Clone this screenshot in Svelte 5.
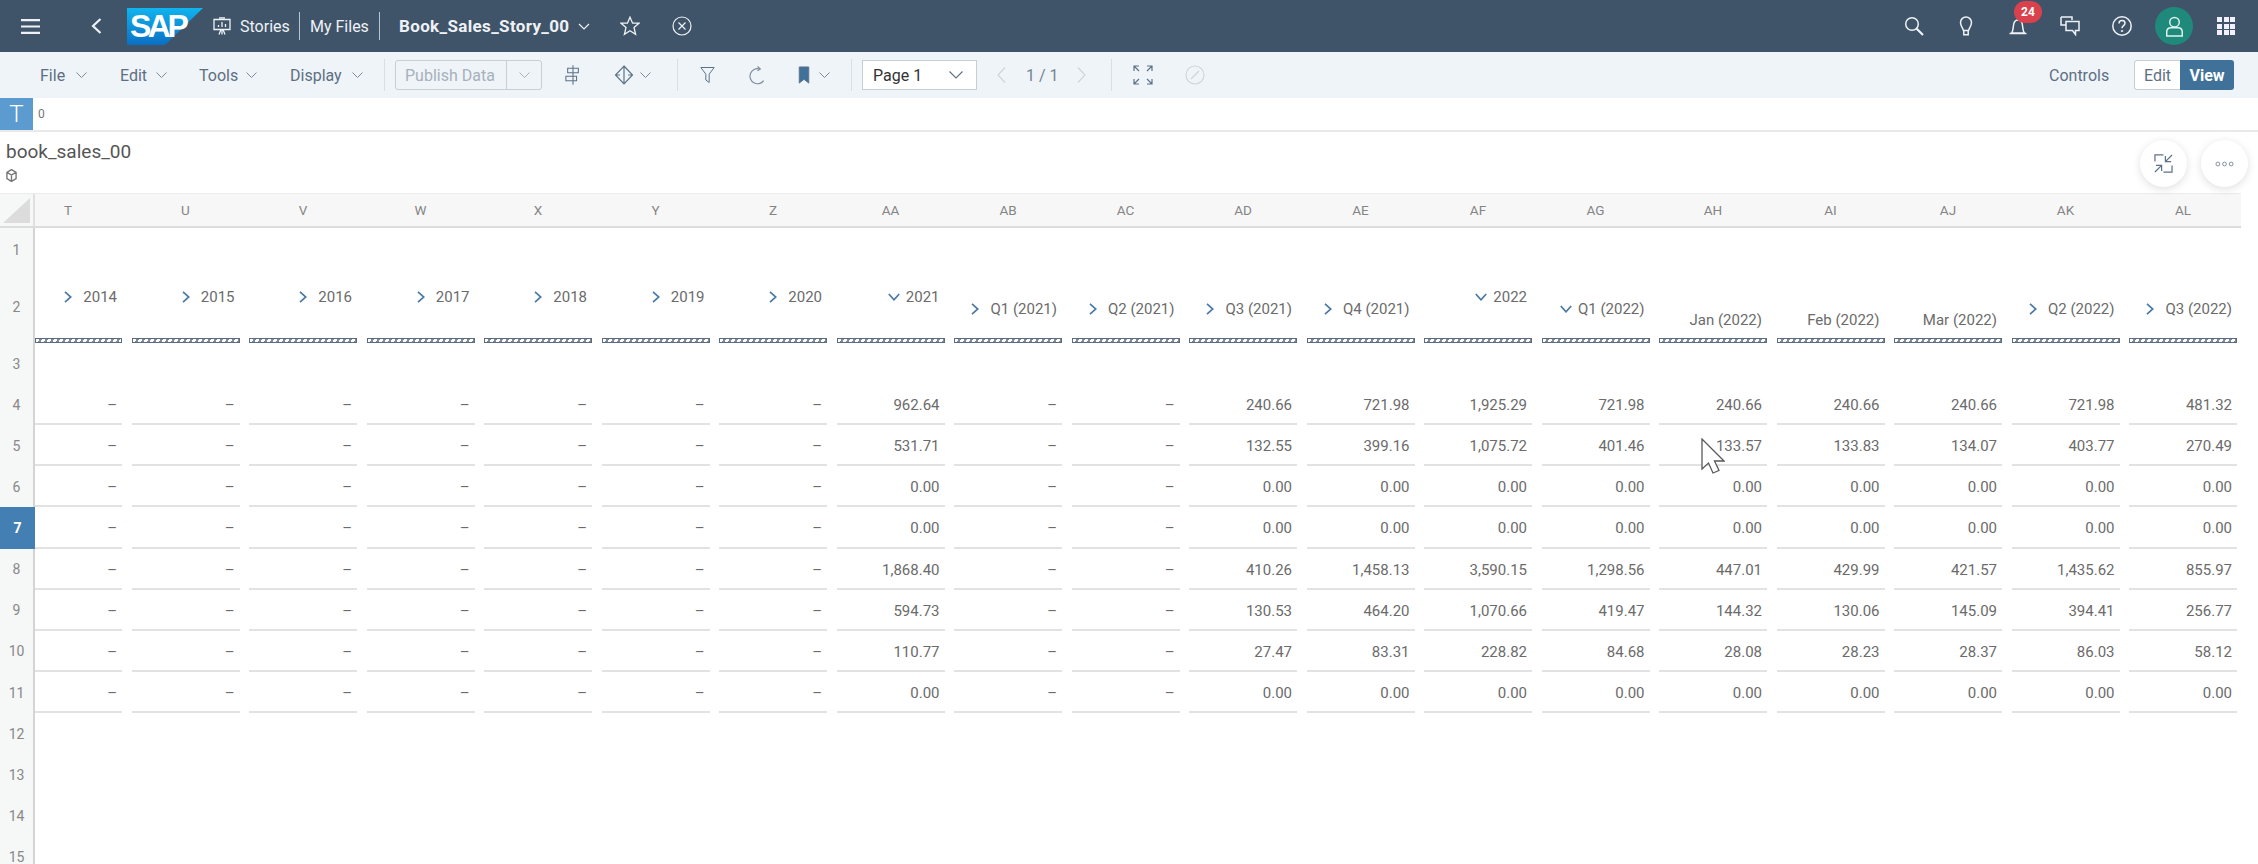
<script>
  const letters = ['T','U','V','W','X','Y','Z','AA','AB','AC','AD','AE','AF','AG','AH','AI','AJ','AK','AL'];
  const heads = [
    ['2014',0,'r'],['2015',0,'r'],['2016',0,'r'],['2017',0,'r'],['2018',0,'r'],['2019',0,'r'],['2020',0,'r'],
    ['2021',0,'d'],['Q1 (2021)',1,'r'],['Q2 (2021)',1,'r'],['Q3 (2021)',1,'r'],['Q4 (2021)',1,'r'],
    ['2022',0,'d'],['Q1 (2022)',1,'d'],['Jan (2022)',2,''],['Feb (2022)',2,''],['Mar (2022)',2,''],['Q2 (2022)',1,'r'],['Q3 (2022)',1,'r']
  ];
  const d = '–', z = '0.00';
  const col = (a,b,c,e,f) => [a,b,z,z,c,e,f,z];
  const blank = [d,d,d,d,d,d,d,d];
  const cols = [
    blank,blank,blank,blank,blank,blank,blank,
    col('962.64','531.71','1,868.40','594.73','110.77'),
    blank,blank,
    col('240.66','132.55','410.26','130.53','27.47'),
    col('721.98','399.16','1,458.13','464.20','83.31'),
    col('1,925.29','1,075.72','3,590.15','1,070.66','228.82'),
    col('721.98','401.46','1,298.56','419.47','84.68'),
    col('240.66','133.57','447.01','144.32','28.08'),
    col('240.66','133.83','429.99','130.06','28.23'),
    col('240.66','134.07','421.57','145.09','28.37'),
    col('721.98','403.77','1,435.62','394.41','86.03'),
    col('481.32','270.49','855.97','256.77','58.12')
  ];
  const dataRows = [0,1,2,3,4,5,6,7];
  const emptyRows = [12,13,14,15];
</script>

<div class="page">
  <header class="top">
    <svg class="menu" viewBox="0 0 19 15"><path d="M0 1.2h19M0 7.5h19M0 13.8h19"/></svg>
    <svg class="back" viewBox="0 0 11 16"><path d="M9.5 1 2 8l7.5 7"/></svg>
    <div class="logo"><svg viewBox="0 0 76 37" preserveAspectRatio="none"><defs><linearGradient id="sapg" x1="0" y1="0" x2="0" y2="1"><stop offset="0" stop-color="#10b4ee"/><stop offset="1" stop-color="#0a6fc4"/></linearGradient></defs><polygon points="0,0 76,0 38,37 0,37" fill="url(#sapg)"/></svg><span>SAP</span></div>
    <svg class="board" viewBox="0 0 18 18"><path d="M1 2.5h16v10H1zM6 .8h6M9 12.5v5M6 17.5l2-5M12 17.5l-2-5M5.5 10V8M9 10V5M12.5 10V7"/></svg>
    <span class="stories">Stories</span>
    <i class="tdiv first"></i>
    <span class="myfiles">My Files</span>
    <i class="tdiv second"></i>
    <b class="story">Book_Sales_Story_00</b>
    <svg class="tchev" viewBox="0 0 12 7"><path d="M1 1l5 5 5-5"/></svg>
    <svg class="star" viewBox="0 0 20 20"><path d="M10 1.2l2.6 6h6.4l-5 4.3 1.6 6.8L10 14.700l-5.600 3.600L6 11.500 1 7.200h6.400z"/></svg>
    <svg class="closec" viewBox="0 0 20 20"><circle cx="10" cy="10" r="9"/><path d="M6.500 6.500l7 7M13.500 6.500l-7 7"/></svg>

    <svg class="search ri" viewBox="0 0 20 20"><circle cx="8" cy="8" r="6.300"/><path d="M12.500 12.500l6.500 6.500" class="thick"/></svg>
    <svg class="ri" viewBox="0 0 20 20"><path d="M7.500 14.500C6.800 11.500 4.500 10 4.500 6.500a5.500 5.500 0 0 1 11 0c0 3.500-2.300 5-3 8zM7.800 14.500h4.400v4.300H7.800z"/></svg>
    <div class="bell ri">
      <svg viewBox="0 0 20 20"><path d="M3.500 17c2-2 1.500-7 2.500-10 .6-1.800 2-3 4-3s3.400 1.200 4 3c1 3 .5 8 2.500 10zM1.500 17.500h17"/></svg>
      <span class="badge">24</span>
    </div>
    <svg class="ri" viewBox="0 0 20 20"><path d="M1 1h11v3M6 9H1V1M6 5.500h13v9h-3.500v4l-3-4H6z"/></svg>
    <svg class="ri" viewBox="0 0 20 20"><circle cx="10" cy="10" r="9.200"/><path d="M7 7.500c0-2 1.300-3 3-3s3 1 3 2.700c0 2.300-3 2.500-3 5"/><path d="M10 14.200v1.600" class="thick"/></svg>
    <div class="avatar"><svg viewBox="0 0 22 24"><circle cx="11" cy="7" r="5.500"/><path d="M2 23v-4.500c0-3 2-5 5-5h8c3 0 5 2 5 5V23z"/></svg></div>
    <div class="apps">{#each Array(9) as _}<i></i>{/each}</div>
  </header>

  <nav class="tools">
    <span class="m file">File</span><svg class="mc" viewBox="0 0 11 6"><path d="M.5.500l5 5 5-5"/></svg>
    <span class="m edit">Edit</span><svg class="mc" viewBox="0 0 11 6"><path d="M.5.500l5 5 5-5"/></svg>
    <span class="m tl">Tools</span><svg class="mc" viewBox="0 0 11 6"><path d="M.5.500l5 5 5-5"/></svg>
    <span class="m disp">Display</span><svg class="mc" viewBox="0 0 11 6"><path d="M.5.500l5 5 5-5"/></svg>
    <i class="bdiv d1"></i>
    <div class="publish"><span>Publish Data</span><em><svg viewBox="0 0 11 6"><path d="M.5.500l5 5 5-5"/></svg></em></div>
    <svg class="tic align" viewBox="0 0 18 22"><path d="M9 0v22M3 3.500h12v5H3zM1 12.500h12v5H1z"/></svg>
    <svg class="tic move" viewBox="0 0 20 20"><path d="M10 1l8.500 9-8.500 9-8.500-9zM10 1v18M6 10H1.500M18.500 10H14"/></svg>
    <svg class="mc movec" viewBox="0 0 11 6"><path d="M.5.500l5 5 5-5"/></svg>
    <i class="bdiv d2"></i>
    <svg class="tic filter" viewBox="0 0 18 20"><path d="M1 1h16l-6 8v10l-4-3V9z"/></svg>
    <svg class="tic refresh" viewBox="0 0 18 20"><path d="M15.500 15.500A8 8 0 1 1 11 3"/><path d="M9 .5l3 2.500-3 2"/></svg>
    <svg class="bookmark" viewBox="0 0 12 20"><path d="M1 1h10v17l-5-4-5 4z"/></svg>
    <svg class="mc bmc" viewBox="0 0 11 6"><path d="M.5.500l5 5 5-5"/></svg>
    <i class="bdiv d3"></i>
    <div class="pagesel"><span>Page 1</span><svg viewBox="0 0 14 8"><path d="M.5.500l6.500 6.500 6.500-6.500"/></svg></div>
    <svg class="pg prev" viewBox="0 0 9 16"><path d="M8 .5 1 8l7 7.500"/></svg>
    <span class="count">1 / 1</span>
    <svg class="pg next" viewBox="0 0 9 16"><path d="M1 .5 8 8l-7 7.500"/></svg>
    <i class="bdiv d4"></i>
    <svg class="tic full" viewBox="0 0 20 20"><path d="M1 6V1h5M1 1l5 5M19 6V1h-5M19 1l-5 5M1 14v5h5M1 19l5-5M19 14v5h-5M19 19l-5-5"/></svg>
    <svg class="tic check" viewBox="0 0 20 20"><circle cx="10" cy="10" r="9"/><path d="M6 14 14 6"/></svg>
    <span class="controls">Controls</span>
    <div class="seg"><span class="e">Edit</span><span class="v">View</span></div>
  </nav>

  <section class="formula">
    <div class="tbox">T</div>
    <span>0</span>
  </section>

  <section class="title">
    <div class="name">book_sales_00</div>
    <svg class="cube" viewBox="0 0 12 14"><path d="M6 .5l5 3v7l-5 3-5-3v-7zM1 3.500l5 3 5-3M6 6.500v7"/></svg>
  </section>

  <section class="sheet">
    <div class="row colhead">
      <div class="rh corner"><i></i></div>
      <div class="cells">{#each letters as l}<div class="letter">{l}</div>{/each}</div>
    </div>
    <div class="row r1"><div class="rh">1</div><div class="cells"></div></div>
    <div class="row r2">
      <div class="rh">2</div>
      <div class="cells">
        {#each heads as [t,lvl,ch]}
          <div class="hcell">
            <div class="htext l{lvl}">
              {#if ch==='r'}<svg class="ch" viewBox="0 0 8 12"><path d="M1 .8 6.800 6 1 11.200"/></svg>{/if}
              {#if ch==='d'}<svg class="chd" viewBox="0 0 12 8"><path d="M.8 1 6 6.800 11.200 1"/></svg>{/if}
              <span>{t}</span>
            </div>
            <div class="hatch"></div>
          </div>
        {/each}
      </div>
    </div>
    <div class="row r3"><div class="rh">3</div><div class="cells"></div></div>
    {#each dataRows as r}
      <div class="row data">
        <div class="rh" class:sel={r===3}>{r+4}</div>
        <div class="cells">{#each cols as c}<div class="cell">{c[r]}</div>{/each}</div>
      </div>
    {/each}
    {#each emptyRows as n}
      <div class="row data"><div class="rh">{n}</div><div class="cells"></div></div>
    {/each}
  </section>

  <button class="fab f1" aria-label="collapse"><svg viewBox="0 0 20 20"><path d="M1 8V1h9M1 19l7-7M2 12h6v6M19 12v7h-9M19 1l-7 7M18 8h-6V2"/></svg></button>
  <button class="fab f2" aria-label="more"><svg viewBox="0 0 20 6"><circle cx="3" cy="3" r="2"/><circle cx="10" cy="3" r="2"/><circle cx="17" cy="3" r="2"/></svg></button>
  <svg class="cursor" viewBox="0 0 24 36"><path d="M1 1v30l6.500-6 4.500 10 6-2.500-4.500-9.500H23z"/></svg>
</div>

<style>
  :global(body){margin:0;background:#fff;overflow:hidden}
  .page{position:relative;width:2258px;height:864px;overflow:hidden;font-family:Roboto,"Liberation Sans",sans-serif;color:#666}
  svg{fill:none;stroke:currentColor;stroke-width:1.500;display:block;flex:none}

  .top{height:52px;background:#3f5469;display:flex;align-items:center;color:#eef2f6;font-size:16px;box-sizing:border-box;padding-right:23px}
  .menu{width:19px;height:15px;margin-left:21px;stroke-width:2.200}
  .back{width:11px;height:16px;margin-left:51px;stroke-width:2.200}
  .logo{position:relative;width:76px;height:37px;margin-left:25px}
  .logo svg{position:absolute;inset:0;width:76px;height:37px;stroke:none}
  .logo span{position:absolute;left:3px;top:1px;font:bold 32px/34px "Liberation Sans",sans-serif;color:#fff;letter-spacing:-3.500px}
  .board{width:18px;height:18px;margin-left:10px;stroke-width:1.300}
  .stories{margin-left:9px;width:50px}
  .tdiv{width:1px;height:28px;background:#b9c4cf;margin-left:9px}
  .myfiles{margin-left:10px;width:60px}
  .story{margin-left:19px;width:170px;white-space:nowrap;font-weight:700;font-size:17px;letter-spacing:.35px}
  .tchev{width:12px;height:7px;margin-left:9px;stroke-width:1.200}
  .star{width:20px;height:20px;margin-left:30px;stroke-width:1.300}
  .closec{width:20px;height:20px;margin-left:32px;stroke-width:1.200}
  .ri{width:20px;height:20px;margin-left:32px;stroke-width:1.500}
  .search{margin-left:auto}
  .thick{stroke-width:2.200}
  .bell{position:relative}
  .bell svg{width:20px;height:20px}
  .badge{position:absolute;left:6px;top:-15px;width:28px;height:22px;border-radius:11px;background:#d9414c;color:#fff;font-size:12px;font-weight:700;display:flex;align-items:center;justify-content:center}
  .avatar{width:38px;height:38px;border-radius:50%;background:#1f8a7b;margin-left:23px;display:flex;align-items:center;justify-content:center}
  .avatar svg{width:19px;height:21px;stroke:#dff2ee;stroke-width:1.700}
  .apps{width:18px;height:18px;margin-left:24px;display:grid;grid-template-columns:repeat(3,5px);grid-auto-rows:5px;gap:1.500px}
  .apps i{background:#f2efff}

  .tools{height:46px;background:#eff4f9;display:flex;align-items:center;font-size:16px;color:#5d6f82}
  .mc{width:11px;height:6px;color:#7d8b99;stroke-width:1}
  .m{margin-right:10px}
  .file{margin-left:40px;width:26px;margin-right:10px}
  .edit{margin-left:33px;width:27px;margin-right:9px}
  .tl{margin-left:32px;width:38px;margin-right:9px}
  .disp{margin-left:33px;width:53px;margin-right:9px}
  .bdiv{width:1px;height:32px;background:#d9dfe5}
  .d1{margin-left:21px}
  .publish{margin-left:10px;width:147px;height:30px;box-sizing:border-box;border:1px solid #c6ced6;border-radius:3px;display:flex;align-items:center;color:#a7b1bb}
  .publish span{width:110px;padding-left:9px;box-sizing:border-box;white-space:nowrap}
  .publish em{flex:1;height:100%;border-left:1px solid #c6ced6;display:flex;align-items:center;justify-content:center}
  .publish svg{width:11px;height:6px;stroke-width:1}
  .tic{color:#5d7289;stroke-width:1.200}
  .align{width:16px;height:20px;margin-left:23px}
  .move{width:20px;height:20px;margin-left:33px}
  .movec{margin-left:6px}
  .d2{margin-left:26px}
  .filter{width:15px;height:18px;margin-left:22px}
  .refresh{width:17px;height:19px;margin-left:34px;color:#7d8b99}
  .bookmark{width:12px;height:19px;margin-left:32px;color:#5d7289;fill:#3f7199;stroke-width:1}
  .bmc{margin-left:9px}
  .d3{margin-left:21px}
  .pagesel{margin-left:10px;width:115px;height:30px;box-sizing:border-box;border:1px solid #c6ced6;background:#fff;display:flex;align-items:center;justify-content:space-between;padding:0 13px 0 10px;color:#333}
  .pagesel svg{width:14px;height:8px;color:#5d6f82;stroke-width:1.100}
  .pg{width:9px;height:16px;color:#ccd3da;stroke-width:1.100}
  .prev{margin-left:20px}
  .count{margin-left:20px;width:36px;white-space:nowrap;color:#76838f}
  .next{margin-left:15px}
  .d4{margin-left:25px}
  .full{width:20px;height:20px;margin-left:21px}
  .check{width:20px;height:20px;margin-left:32px;color:#cdd4db;stroke-width:1.100}
  .controls{margin-left:auto;width:61px;white-space:nowrap}
  .seg{margin-left:24px;margin-right:24px;width:100px;height:30px;display:flex;border-radius:3px;overflow:hidden;box-sizing:border-box}
  .seg .e{width:46px;box-sizing:border-box;background:#fff;border:1px solid #c6ced6;border-right:0;border-radius:3px 0 0 3px;display:flex;align-items:center;justify-content:center}
  .seg .v{flex:1;background:#3f7199;color:#fff;font-weight:700;display:flex;align-items:center;justify-content:center}

  .formula{height:34px;box-sizing:border-box;border-bottom:2px solid #e9e9e9;display:flex;font-size:12px;color:#777}
  .tbox{width:33px;background:#5b9bd0;color:#fff;font-size:24px;display:flex;align-items:center;justify-content:center;font-weight:300}
  .formula span{margin-left:5px;align-self:center}

  .title{height:61px;box-sizing:border-box;padding:10px 0 0 6px;color:#555}
  .name{font-size:19px;line-height:20px}
  .cube{width:11px;height:13px;margin:7px 0 0 0;color:#777}

  .row{display:flex}
  .rh{width:35px;box-sizing:border-box;border-right:2px solid #d4d4d4;background:#f6f7f7;display:flex;align-items:center;justify-content:center;font-size:14px;color:#888;flex:none}
  .rh.sel{background:#447fb4;color:#fff;font-weight:700;border-right:0}
  .cells{display:grid;grid-template-columns:87px repeat(18,108px);column-gap:9.500px}

  .colhead{height:35px;box-sizing:border-box;width:2241px;background:#f7f7f7;border-bottom:2px solid #dcdcdc;border-top:1px solid #ececec}
  .corner{position:relative;border-right:2px solid #e0e0e0}
  .corner i{position:absolute;left:3px;top:4px;width:27px;height:25px;background:#dcdcdc;clip-path:polygon(100% 0,100% 100%,0 100%)}
  .letter{display:flex;align-items:center;justify-content:center;font-size:13.500px;color:#858585}
  .letter:first-child{padding-right:21px}

  .r1{height:43px}
  .r2{height:72px}
  .r3{height:41px}
  .hcell{position:relative;display:flex;flex-direction:column;justify-content:flex-end;height:72px}
  .htext{display:flex;justify-content:flex-end;align-items:center;gap:11px;padding-right:5px;height:16px;font-size:15px;line-height:16px;color:#6b6b6b;white-space:nowrap}
  .htext.l0{margin-bottom:33px}
  .htext.l1{margin-bottom:21px}
  .htext.l2{margin-bottom:10px}
  .ch{width:8px;height:12px;color:#4a7aa5;stroke-width:1.700}
  .chd{width:12px;height:8px;color:#4a7aa5;stroke-width:1.700;margin-right:-5px}
  .hatch{height:5px;box-sizing:border-box;border:1px solid #5c6b7e;background:repeating-linear-gradient(120deg,#fff 0 3.200px,#7d8a9b 3.200px 5.200px)}

  .data{height:41.150px}
  .cell{box-sizing:border-box;height:41.150px;border-bottom:2px solid #e2e2e2;display:flex;align-items:center;justify-content:flex-end;padding:3px 5px 0 0;font-size:15px;color:#6b6b6b}

  .fab{position:absolute;width:47px;height:47px;top:140px;border-radius:50%;border:0;padding:0;background:#fff;box-shadow:0 2px 8px rgba(0,0,0,.13);display:flex;align-items:center;justify-content:center}
  .f1{left:2140px}
  .f2{left:2201px}
  .f1 svg{width:19px;height:19px;color:#5d7289;stroke-width:1.300}
  .f2 svg{width:19px;height:6px;color:#7d8b99;stroke-width:1}
  .cursor{position:absolute;left:1701px;top:438px;width:24px;height:36px;color:#5a5a5a;fill:#fff;stroke-width:1.300}
</style>
